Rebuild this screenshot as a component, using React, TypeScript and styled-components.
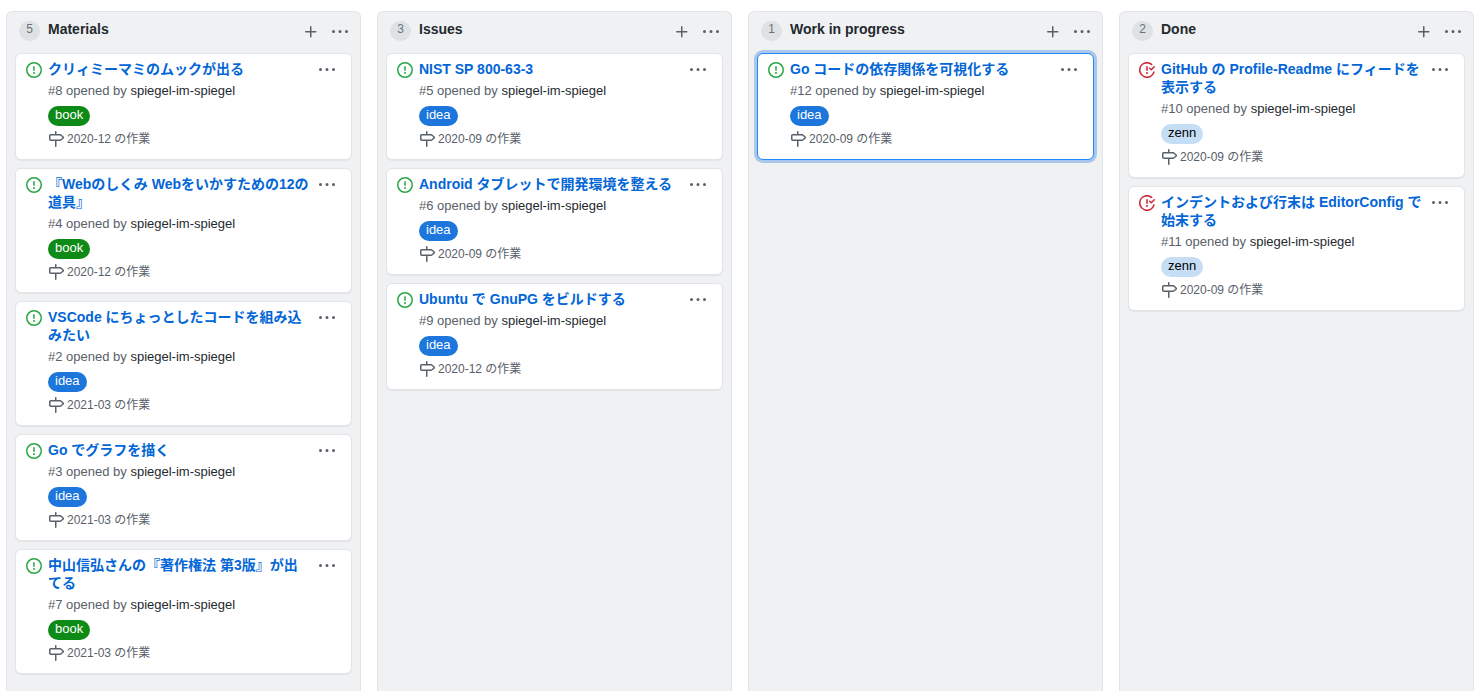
import React from "react";
import styled, { createGlobalStyle } from "styled-components";

const GlobalStyle = createGlobalStyle`
  * { box-sizing: border-box; }
  body {
    margin: 0;
    background: #fff;
    color: #24292e;
    font-family: "Liberation Sans", "Noto Sans CJK JP", sans-serif;
    font-size: 13px;
    line-height: 18px;
  }
`;

const Board = styled.main`
  display: flex;
  gap: 16px;
  min-height: 100vh;
  padding: 11px 3px 0 6px;
`;

const ColumnBox = styled.section`
  flex: 1 1 0;
  min-width: 0;
  padding: 0 8px 16px;
  background: #eff1f3;
  border: 1px solid #e1e4e8;
  border-bottom: 0;
  border-radius: 6px 6px 0 0;
`;

const ColumnHeader = styled.header`
  display: flex;
  align-items: flex-start;
  height: 41px;
  padding: 9px 4px 0;
`;

const Counter = styled.span`
  min-width: 21px;
  height: 20px;
  margin-right: 8px;
  border-radius: 10px;
  background: #dfe2e5;
  color: #6a737d;
  font-size: 12px;
  line-height: 17px;
  text-align: center;
`;

const ColumnTitle = styled.h3`
  flex: 1;
  margin: 0;
  font-size: 14px;
  font-weight: 600;
  line-height: 17px;
`;

const IconButton = styled.button`
  display: block;
  flex: none;
  height: 16px;
  padding: 0;
  border: 0;
  background: none;
  color: #586069;
  cursor: pointer;
`;

const HeaderActions = styled.div`
  display: flex;
  gap: 13px;
  padding-top: 3px;
`;

const Svg = styled.svg`
  display: block;
  flex: none;
  fill: currentColor;
`;

const CardList = styled.div`
  display: flex;
  flex-direction: column;
  gap: 8px;
`;

const CardBox = styled.article<{ $selected?: boolean }>`
  display: flex;
  align-items: flex-start;
  padding: 6px 16px 11px 10px;
  background: #fff;
  border: 1px solid ${(p) => (p.$selected ? "#2188ff" : "#e1e4e8")};
  border-radius: 6px;
  box-shadow: ${(p) =>
    p.$selected ? "0 0 0 3px rgba(3, 102, 214, 0.3)" : "0 1px 1px rgba(27, 31, 35, 0.06)"};
`;

const Status = styled.span<{ $closed?: boolean }>`
  margin-right: 6px;
  padding-top: 2px;
  color: ${(p) => (p.$closed ? "#cb2431" : "#28a745")};
`;

const CardBody = styled.div`
  flex: 1;
  min-width: 0;
  padding-right: 9px;
`;

const CardMenu = styled.div`
  padding-top: 2px;
`;

const IssueLink = styled.a`
  display: block;
  color: #0366d6;
  font-size: 14px;
  font-weight: 600;
  text-decoration: none;
`;

const Meta = styled.div`
  margin-top: 4px;
  color: #586069;
`;

const Author = styled.a`
  color: #24292e;
  text-decoration: none;
`;

const labelColors = {
  book: { bg: "#0e8a16", fg: "#fff" },
  idea: { bg: "#1d76db", fg: "#fff" },
  zenn: { bg: "#c5def5", fg: "#000" },
};

type LabelName = keyof typeof labelColors;

const Label = styled.a<{ $name: LabelName }>`
  display: block;
  width: fit-content;
  height: 20px;
  margin-top: 6px;
  padding: 0 7px;
  border-radius: 10px;
  background: ${(p) => labelColors[p.$name].bg};
  color: ${(p) => labelColors[p.$name].fg};
  line-height: 17px;
  text-decoration: none;
`;

const Milestone = styled.a`
  display: flex;
  align-items: center;
  gap: 3px;
  margin-top: 4px;
  color: #586069;
  font-size: 12px;
  text-decoration: none;
`;

const paths = {
  opened:
    "M8 1.5a6.5 6.5 0 100 13 6.5 6.5 0 000-13zM0 8a8 8 0 1116 0A8 8 0 010 8zm9 3a1 1 0 11-2 0 1 1 0 012 0zm-.25-6.25a.75.75 0 00-1.5 0v3.5a.75.75 0 001.5 0v-3.5z",
  closed:
    "M1.5 8a6.5 6.5 0 0110.65-5.003.75.75 0 00.959-1.153 8 8 0 102.592 8.33.75.75 0 10-1.444-.407A6.5 6.5 0 011.5 8zM8 12a1 1 0 100-2 1 1 0 000 2zm0-8a.75.75 0 01.75.75v3.5a.75.75 0 11-1.5 0v-3.5A.75.75 0 018 4zm4.78 4.28l3-3a.75.75 0 00-1.06-1.06l-2.47 2.47-.97-.97a.749.749 0 10-1.06 1.06l1.5 1.5a.75.75 0 001.06 0z",
  milestone:
    "M7.75 0a.75.75 0 01.75.75V3h3.634c.414 0 .814.147 1.13.414l2.07 1.75a1.75 1.75 0 010 2.672l-2.07 1.75a1.75 1.75 0 01-1.13.414H8.5v5.25a.75.75 0 11-1.5 0V10H2.75A1.75 1.75 0 011 8.25v-3.5C1 3.784 1.784 3 2.75 3H7V.75A.75.75 0 017.75 0zm0 8.5h4.384a.25.25 0 00.161-.06l2.07-1.75a.25.25 0 000-.38l-2.07-1.75a.25.25 0 00-.161-.06H2.75a.25.25 0 00-.25.25v3.5c0 .138.112.25.25.25h5z",
  plus: "M7.75 2a.75.75 0 01.75.75V7h4.25a.75.75 0 110 1.5H8.5v4.25a.75.75 0 11-1.5 0V8.5H2.75a.75.75 0 010-1.5H7V2.75A.75.75 0 017.75 2z",
  kebab:
    "M8 9a1.5 1.5 0 100-3 1.5 1.5 0 000 3zM1.5 9a1.5 1.5 0 100-3 1.5 1.5 0 000 3zm13 0a1.5 1.5 0 100-3 1.5 1.5 0 000 3z",
};

const Icon = ({ name }: { name: keyof typeof paths }) => (
  <Svg width="16" height="16" viewBox="0 0 16 16" aria-hidden="true">
    <path fillRule="evenodd" d={paths[name]} />
  </Svg>
);

interface Issue {
  id: number;
  title: string;
  label: LabelName;
  milestone: string;
  closed?: boolean;
  selected?: boolean;
}

const columns: { name: string; issues: Issue[] }[] = [
  {
    name: "Materials",
    issues: [
      { id: 8, title: "クリィミーマミのムックが出る", label: "book", milestone: "2020-12 の作業" },
      { id: 4, title: "『Webのしくみ Webをいかすための12の道具』", label: "book", milestone: "2020-12 の作業" },
      { id: 2, title: "VSCode にちょっとしたコードを組み込みたい", label: "idea", milestone: "2021-03 の作業" },
      { id: 3, title: "Go でグラフを描く", label: "idea", milestone: "2021-03 の作業" },
      { id: 7, title: "中山信弘さんの『著作権法 第3版』が出てる", label: "book", milestone: "2021-03 の作業" },
    ],
  },
  {
    name: "Issues",
    issues: [
      { id: 5, title: "NIST SP 800-63-3", label: "idea", milestone: "2020-09 の作業" },
      { id: 6, title: "Android タブレットで開発環境を整える", label: "idea", milestone: "2020-09 の作業" },
      { id: 9, title: "Ubuntu で GnuPG をビルドする", label: "idea", milestone: "2020-12 の作業" },
    ],
  },
  {
    name: "Work in progress",
    issues: [
      { id: 12, title: "Go コードの依存関係を可視化する", label: "idea", milestone: "2020-09 の作業", selected: true },
    ],
  },
  {
    name: "Done",
    issues: [
      { id: 10, title: "GitHub の Profile-Readme にフィードを表示する", label: "zenn", milestone: "2020-09 の作業", closed: true },
      { id: 11, title: "インデントおよび行末は EditorConfig で始末する", label: "zenn", milestone: "2020-09 の作業", closed: true },
    ],
  },
];

const Card = ({ issue }: { issue: Issue }) => (
  <CardBox $selected={issue.selected}>
    <Status $closed={issue.closed}>
      <Icon name={issue.closed ? "closed" : "opened"} />
    </Status>
    <CardBody>
      <IssueLink href="#">{issue.title}</IssueLink>
      <Meta>
        #{issue.id} opened by <Author href="#">spiegel-im-spiegel</Author>
      </Meta>
      <Label href="#" $name={issue.label}>
        {issue.label}
      </Label>
      <Milestone href="#">
        <Icon name="milestone" />
        {issue.milestone}
      </Milestone>
    </CardBody>
    <CardMenu>
      <IconButton type="button" aria-label="Card menu">
        <Icon name="kebab" />
      </IconButton>
    </CardMenu>
  </CardBox>
);

export default function App() {
  return (
    <>
      <GlobalStyle />
      <Board lang="ja">
        {columns.map((column) => (
          <ColumnBox key={column.name}>
            <ColumnHeader>
              <Counter>{column.issues.length}</Counter>
              <ColumnTitle>{column.name}</ColumnTitle>
              <HeaderActions>
                <IconButton type="button" aria-label="Add a card">
                  <Icon name="plus" />
                </IconButton>
                <IconButton type="button" aria-label="Column menu">
                  <Icon name="kebab" />
                </IconButton>
              </HeaderActions>
            </ColumnHeader>
            <CardList>
              {column.issues.map((issue) => (
                <Card key={issue.id} issue={issue} />
              ))}
            </CardList>
          </ColumnBox>
        ))}
      </Board>
    </>
  );
}
